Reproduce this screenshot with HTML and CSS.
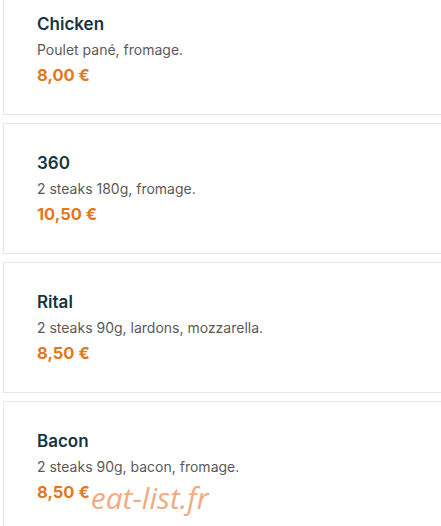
FILE: index.html
```html
<!DOCTYPE html>
<html lang="fr">
<head>
<meta charset="utf-8">
<link rel="stylesheet" href="styles.css">
</head>
<body>
<div class="list">
  <div class="card">
    <div class="title">Chicken</div>
    <div class="desc">Poulet pané, fromage.</div>
    <div class="price">8,00 €</div>
  </div>
  <div class="card">
    <div class="title">360</div>
    <div class="desc">2 steaks 180g, fromage.</div>
    <div class="price">10,50 €</div>
  </div>
  <div class="card">
    <div class="title">Rital</div>
    <div class="desc">2 steaks 90g, lardons, mozzarella.</div>
    <div class="price">8,50 €</div>
  </div>
  <div class="card">
    <div class="title">Bacon</div>
    <div class="desc">2 steaks 90g, bacon, fromage.</div>
    <div class="price-row"><span class="price">8,50 €</span><span class="mark">eat-list.fr</span></div>
  </div>
</div>
</body>
</html>
```
FILE: styles.css
```css
html, body {
  margin: 0;
  padding: 0;
  background: #fff;
  overflow: hidden;
}
body {
  font-family: "Inter", "Noto Sans", sans-serif;
}
.list {
  margin-top: -16px;
  padding-left: 3px;
  display: flex;
  flex-direction: column;
  gap: 8px;
}
.card {
  border: 1px solid #e6e6e6;
  border-right: none;
  box-sizing: border-box;
  height: 131px;
  padding: 28px 0 0 33px;
}
.title {
  font-size: 17px;
  font-weight: 600;
  color: #173540;
  line-height: 22px;
}
.desc {
  margin-top: 5px;
  font-size: 14px;
  color: #5a5a5a;
  line-height: 19px;
}
.price {
  display: block;
  margin-top: 5px;
  font-size: 16.5px;
  font-weight: 700;
  color: #e2781e;
  line-height: 22px;
}
.price-row {
  display: flex;
  align-items: baseline;
}
.mark {
  position: relative;
  top: 11px;
  font-family: "Open Sans", sans-serif;
  font-style: italic;
  font-size: 30px;
  color: #f3aa80;
  margin-left: 1px;
  line-height: 22px;
}
```
